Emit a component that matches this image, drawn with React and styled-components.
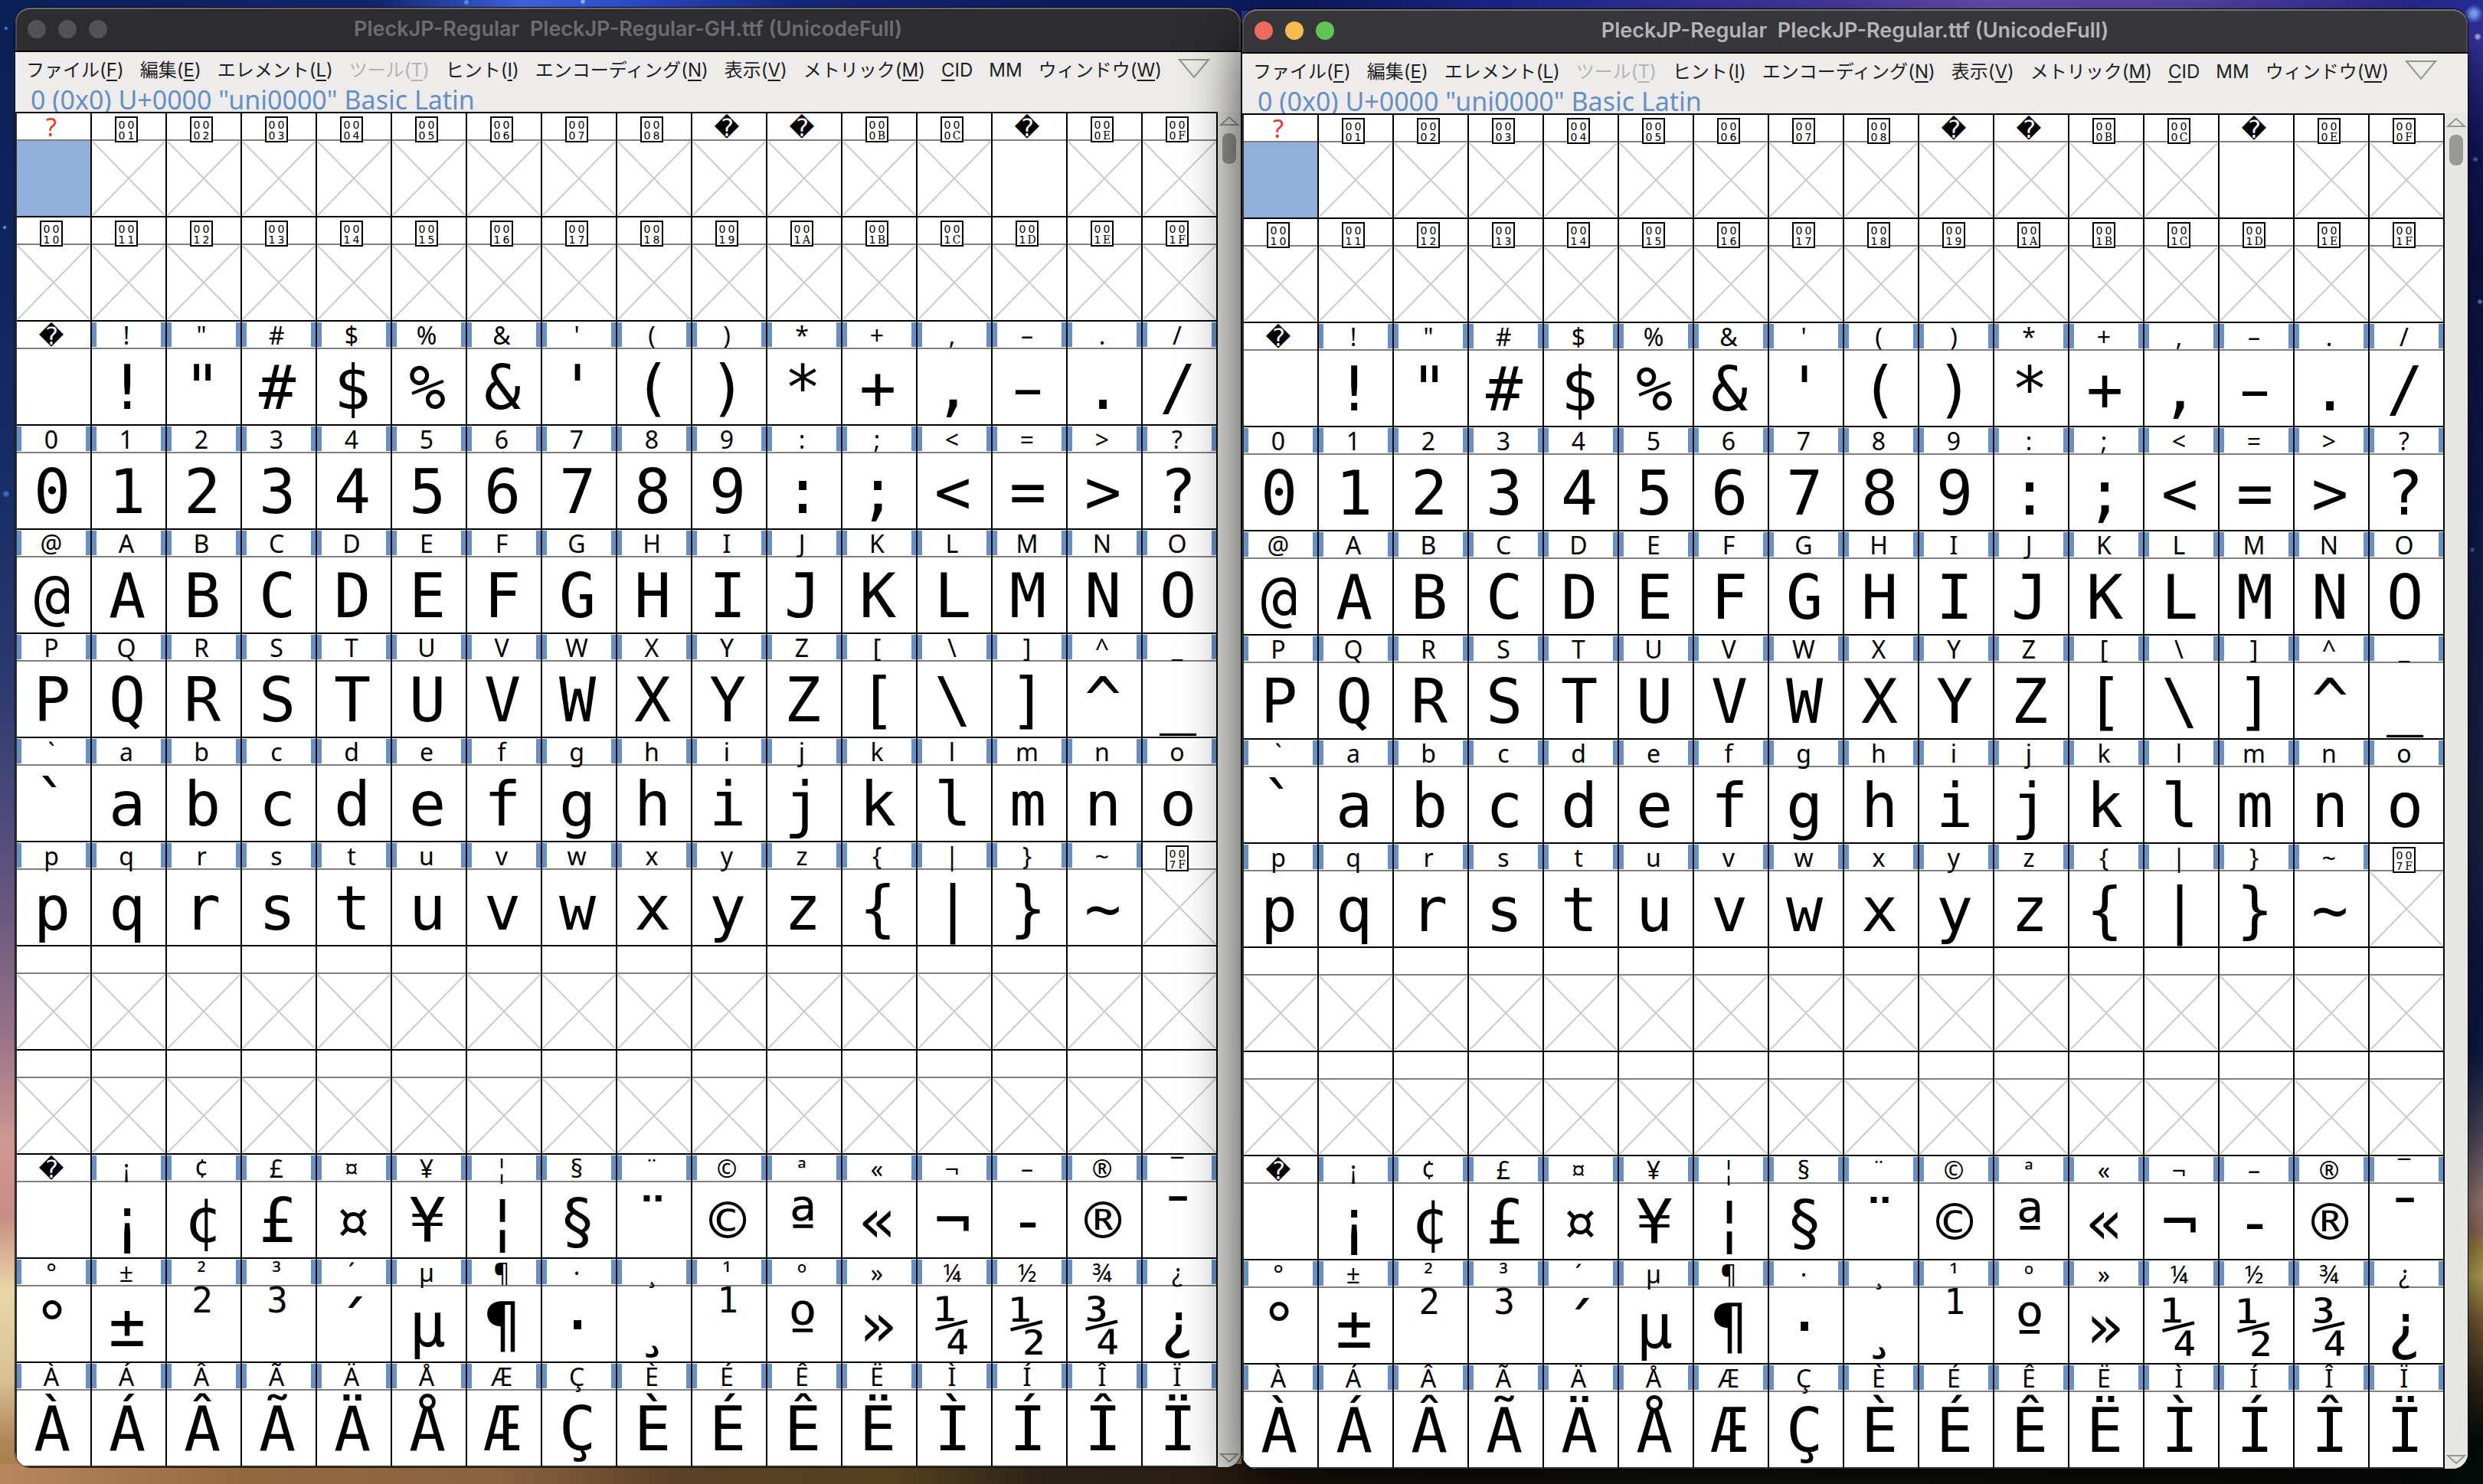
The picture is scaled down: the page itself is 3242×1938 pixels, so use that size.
import React from "react";
import styled, { createGlobalStyle, css } from "styled-components";

const GlobalStyle = createGlobalStyle`
  *, *::before, *::after { box-sizing: border-box; }
  body { margin: 0; background: #0b1536; }
`;

const uiFont = `"Noto Sans", "DejaVu Sans", sans-serif`;
const menuFont = `Inter, "Noto Sans CJK JP", sans-serif`;

const Desktop = styled.main`
  display: grid;
  grid-template-columns: 1fr 1fr;
  align-items: start;
  column-gap: 2px;
  min-height: 100vh;
  padding: 10px 20px 20px;
  overflow: hidden;
  background:
    radial-gradient(circle at 8px 37px, #3f7fe0 0 1px, transparent 3px) 0 0 / 100% 100% no-repeat,
    radial-gradient(circle at 6px 297px, #5f9fe8 0 1px, transparent 3px) 0 0 / 100% 100% no-repeat,
    radial-gradient(circle at 8px 645px, #3f6fb8 0 2px, transparent 5px) 0 0 / 100% 100% no-repeat,
    radial-gradient(circle at 609px 3px, #58a0f0 0 1px, transparent 4px) 0 0 / 100% 100% no-repeat,
    radial-gradient(circle at 761px 2px, #8cc0f8 0 1px, transparent 4px) 0 0 / 100% 100% no-repeat,
    radial-gradient(circle at calc(100% - 12px) 18px, #7fa8ff 0 3px, transparent 12px) 0 0 / 100% 100% no-repeat,
    radial-gradient(circle at calc(100% - 7px) 48px, #b0b8f0 0 2px, transparent 5px) 0 0 / 100% 100% no-repeat,
    radial-gradient(circle at calc(100% - 10px) 208px, #5f90d8 0 1px, transparent 4px) 0 0 / 100% 100% no-repeat,
    radial-gradient(circle at calc(100% - 4px) 394px, #60a8ff 0 1px, transparent 4px) 0 0 / 100% 100% no-repeat,
    radial-gradient(circle at calc(100% - 14px) 718px, #5080b8 0 1px, transparent 4px) 0 0 / 100% 100% no-repeat,
    linear-gradient(90deg, #0b1f58 0, #10246c 15%, #3e60dc 21%, #2c4cc8 25%, #14267c 32%, #0c1c5c 42%, #0c1c60 52%, #1c2a94 60%, #4a3ca8 74%, #6a50b8 80%, #5a48b0 88%, #2c2c96 97%, #2430a0 100%) 0 0 / 100% 14px no-repeat,
    linear-gradient(90deg, #b8865c 0, #94683f 10%, #8a6340 20%, #5c4128 27%, #54401f 36%, #2c2216 42%, #2a1d12 50%, #1c1812 58%, #1a1a12 70%, #14140e 84%, #101310 96%, #04100c 100%) 0 100% / 100% 26px no-repeat,
    linear-gradient(180deg, #0b1f55 0, #10265c 20%, #1a2f66 35%, #2b3a70 46%, #4a4878 54%, #6c5a80 62%, #9a7488 70%, #d09890 77%, #c88c84 82%, #e8d8a8 87%, #d8c090 93%, #b08858 97%, #a07848 100%) 0 0 / 50% 100% no-repeat,
    linear-gradient(180deg, #2c2ca0 0, #3a38b0 3%, #16186c 10%, #0e1650 18%, #10205c 35%, #182450 45%, #202a50 56%, #0e1c4c 65%, #0e2050 71%, #54506c 76%, #b48c88 81%, #a87c68 83%, #b4964c 84%, #d0c060 86%, #86683c 89%, #30261a 94%, #04100c 97%, #04100c 100%) 100% 0 / 50% 100% no-repeat;
`;

const Window = styled.section`
  position: relative;
  min-width: 0;
  margin-top: ${(p) => (p.$active ? "2px" : "0")};
  border-radius: 20px;
  background: #edecea;
  box-shadow: ${(p) =>
    p.$active
      ? "0 0 0 1px #000, 0 30px 76px rgba(0, 0, 0, 0.78)"
      : "0 0 0 1px rgba(0, 0, 0, 0.8)"};
`;

const WindowClip = styled.div`
  overflow: hidden;
  border-radius: 20px;
`;

const TitleBar = styled.header`
  display: grid;
  grid-template-columns: 1fr auto 1fr;
  align-items: center;
  height: 58px;
  padding: 0 16px;
  border-bottom: 2px solid #000;
  border-radius: 20px 20px 0 0;
  background: ${(p) => (p.$active ? "#37363b" : "#2d2c31")};
  box-shadow: inset 0 2px 0 ${(p) => (p.$active ? "#747377" : "#6c6b6f")},
    inset 2px 0 0 #4c4b50, inset -2px 0 0 #4c4b50;
`;

const Lights = styled.div`
  display: flex;
  gap: 16px;
`;

const Light = styled.button`
  width: 24px;
  height: 24px;
  padding: 0;
  border: 0;
  border-radius: 50%;
  background: ${(p) => p.$color};
`;

const Title = styled.h1`
  margin: 0;
  font: 600 27px/32px Inter, sans-serif;
  white-space: pre;
  color: ${(p) => (p.$active ? "#b5b4b7" : "#6d6c70")};
`;

const MenuBar = styled.nav`
  display: flex;
  align-items: center;
  gap: 21px;
  height: 44px;
  padding: 0 14px;
`;

const MenuButton = styled.button`
  padding: 4px 0 0;
  border: 0;
  background: none;
  font: 400 24px/36px ${menuFont};
  white-space: nowrap;
  color: #1e1e1e;

  &:disabled { color: #b4b3b1; }

  u {
    text-decoration-thickness: 2px;
    text-underline-offset: 4px;
  }
`;

const OverflowButton = styled.button`
  display: flex;
  padding: 0;
  border: 0;
  background: none;
`;

const Status = styled.p`
  height: 34px;
  margin: 0;
  padding-left: 20px;
  font: 400 34px/36px ${uiFont};
  white-space: pre;
  color: #668fc4;
`;

const Body = styled.div`
  display: flex;
`;

const GlyphTable = styled.table`
  flex: 1;
  min-width: 0;
  table-layout: fixed;
  border-spacing: 0;
  border-left: 2px solid #333;
  border-top: 2px solid #000;
  background: #fff;
  color: #000;

  tr:last-child td { border-bottom-color: #333; }
`;

const Cell = styled.td`
  padding: 0;
  border-right: 2px solid #000;
  border-bottom: 2px solid #000;
`;

const bars = css`
  &::before, &::after {
    content: "";
    width: 6px;
    height: 32px;
    margin-top: 1px;
    background: #668fc4;
  }
`;

const Label = styled.div`
  display: flex;
  justify-content: ${(p) => (p.$bars ? "space-between" : "center")};
  height: 36px;
  border-bottom: 2px solid #808080;
  ${(p) => p.$bars && bars}
`;

const LabelText = styled.span`
  padding-right: 6px;
  font: 400 32px/36px ${uiFont};
  color: ${(p) => (p.$missing ? "#ee3424" : "#000")};
`;

const Replacement = styled.span`
  padding-right: 6px;
  font: 400 32px/38px "DejaVu Sans", sans-serif;
`;

const HexBox = styled.span`
  display: grid;
  grid-template-columns: 12px 12px;
  justify-content: center;
  align-content: start;
  width: 30px;
  height: 34px;
  margin: 4px 6px 0 0;
  padding-top: 2px;
  border: 2px solid #000;
  background: #fff;
  text-align: center;
`;

const HexDigit = styled.span`
  font: 400 14px/14px ${(p) => (p.$letter ? `"DejaVu Serif", serif` : `"DejaVu Sans", sans-serif`)};
`;

const GlyphBox = styled.div`
  height: 98px;
  padding-right: ${(p) => (p.$text ? "4px" : "0")};
  background: ${(p) => (p.$selected ? "#90b0db" : "transparent")};
  font: 400 80px/102px ${(p) => (p.$dash ? `"DejaVu Sans"` : `"DejaVu Sans Mono"`)}, monospace;
  text-align: center;
`;

const Superior = styled.span`
  display: block;
  font-size: 46px;
  line-height: 36px;
`;

const Cross = styled.svg`
  display: block;
  width: 100%;
  height: 98px;
`;

const ScrollBar = styled.div`
  display: flex;
  flex-direction: column;
  align-items: center;
  width: 30px;
  padding: 5px 0;
  background: #e6e6e2;
`;

const ScrollButton = styled.button`
  display: flex;
  padding: 0;
  border: 0;
  background: none;
`;

const Track = styled.div`
  flex: 1;
  padding: 10px 0;
`;

const Thumb = styled.div`
  width: 18px;
  height: 40px;
  border-radius: 8px;
  background: #999a95;
`;

const Triangle = ({ width, height, up }) => (
  <svg width={width} height={height} viewBox={`0 0 ${width} ${height}`} aria-hidden="true">
    <path
      d={
        up
          ? `M2 ${height - 1}H${width - 2}L${width / 2} 2Z`
          : `M2 1H${width - 2}L${width / 2} ${height - 2}Z`
      }
      fill="none"
      stroke="#959592"
      strokeWidth="2"
    />
  </svg>
);

const menus = [
  ["ファイル", "F"],
  ["編集", "E"],
  ["エレメント", "L"],
  ["ツール", "T", true],
  ["ヒント", "I"],
  ["エンコーディング", "N"],
  ["表示", "V"],
  ["メトリック", "M"],
];

const rowStarts = [0x00, 0x10, 0x20, 0x30, 0x40, 0x50, 0x60, 0x70, 0x80, 0x90, 0xa0, 0xb0, 0xc0];
const replacements = [0x09, 0x0a, 0x0d, 0x20, 0xa0];
const blankGlyphs = [0x00, 0x0d, 0x20, 0xa0];
const superiors = { 0xb2: "2", 0xb3: "3", 0xb9: "1" };
const columns = Array.from({ length: 16 }, (_, i) => i);

const isControl = (code) => code < 0x20 || (code >= 0x7f && code < 0xa0);
const labelFor = (code) => (code === 0x2d || code === 0xad ? "–" : String.fromCharCode(code));
const glyphFor = (code) => {
  if (code === 0x2d) return "–";
  if (code === 0xad) return "-";
  return String.fromCharCode(code);
};

function CodeLabel({ code }) {
  if (code === 0) {
    return <Label><LabelText $missing>?</LabelText></Label>;
  }
  if (replacements.includes(code)) {
    return <Label><Replacement>{"\uFFFD"}</Replacement></Label>;
  }
  if (code >= 0x80 && code < 0xa0) {
    return <Label />;
  }
  if (isControl(code)) {
    const digits = code.toString(16).toUpperCase().padStart(4, "0").split("");
    return (
      <Label>
        <HexBox>
          {digits.map((d, i) => <HexDigit key={i} $letter={d >= "A"}>{d}</HexDigit>)}
        </HexBox>
      </Label>
    );
  }
  return <Label $bars><LabelText>{labelFor(code)}</LabelText></Label>;
}

function Glyph({ code }) {
  if (blankGlyphs.includes(code)) {
    return <GlyphBox $selected={code === 0} />;
  }
  if (isControl(code)) {
    return (
      <GlyphBox>
        <Cross viewBox="0 0 96 98" preserveAspectRatio="none" aria-hidden="true">
          <path d="M1 1L95 97M95 1L1 97" stroke="#cccccc" strokeWidth="2" />
        </Cross>
      </GlyphBox>
    );
  }
  if (superiors[code]) {
    return <GlyphBox $text><Superior>{superiors[code]}</Superior></GlyphBox>;
  }
  return <GlyphBox $text $dash={code === 0x2d}>{glyphFor(code)}</GlyphBox>;
}

function FontWindow({ title, active }) {
  const lights = active ? ["#ed6a5f", "#f5bd4f", "#61c554"] : ["#535257", "#535257", "#535257"];
  return (
    <Window $active={active}>
      <WindowClip>
        <TitleBar $active={active}>
          <Lights>
            {["Close", "Minimize", "Zoom"].map((name, i) => (
              <Light key={name} $color={lights[i]} aria-label={name} />
            ))}
          </Lights>
          <Title $active={active}>{title}</Title>
        </TitleBar>
        <MenuBar>
          {menus.map(([name, key, disabled]) => (
            <MenuButton key={key} disabled={disabled}>
              {name}(<u>{key}</u>)
            </MenuButton>
          ))}
          <MenuButton><u>C</u>ID</MenuButton>
          <MenuButton>MM</MenuButton>
          <MenuButton>ウィンドウ(<u>W</u>)</MenuButton>
          <OverflowButton aria-label="More menus"><Triangle width={42} height={26} /></OverflowButton>
        </MenuBar>
        <Status>{'0 (0x0) U+0000 "uni0000" Basic Latin'}</Status>
        <Body>
          <GlyphTable>
            <tbody>
              {rowStarts.map((start) => (
                <tr key={start}>
                  {columns.map((c) => (
                    <Cell key={c}>
                      <CodeLabel code={start + c} />
                      <Glyph code={start + c} />
                    </Cell>
                  ))}
                </tr>
              ))}
            </tbody>
          </GlyphTable>
          <ScrollBar>
            <ScrollButton aria-label="Scroll up"><Triangle width={26} height={13} up /></ScrollButton>
            <Track><Thumb /></Track>
            <ScrollButton aria-label="Scroll down"><Triangle width={26} height={13} /></ScrollButton>
          </ScrollBar>
        </Body>
      </WindowClip>
    </Window>
  );
}

export default function App() {
  return (
    <>
      <GlobalStyle />
      <Desktop>
        <FontWindow title="PleckJP-Regular  PleckJP-Regular-GH.ttf (UnicodeFull)" />
        <FontWindow title="PleckJP-Regular  PleckJP-Regular.ttf (UnicodeFull)" active />
      </Desktop>
    </>
  );
}
